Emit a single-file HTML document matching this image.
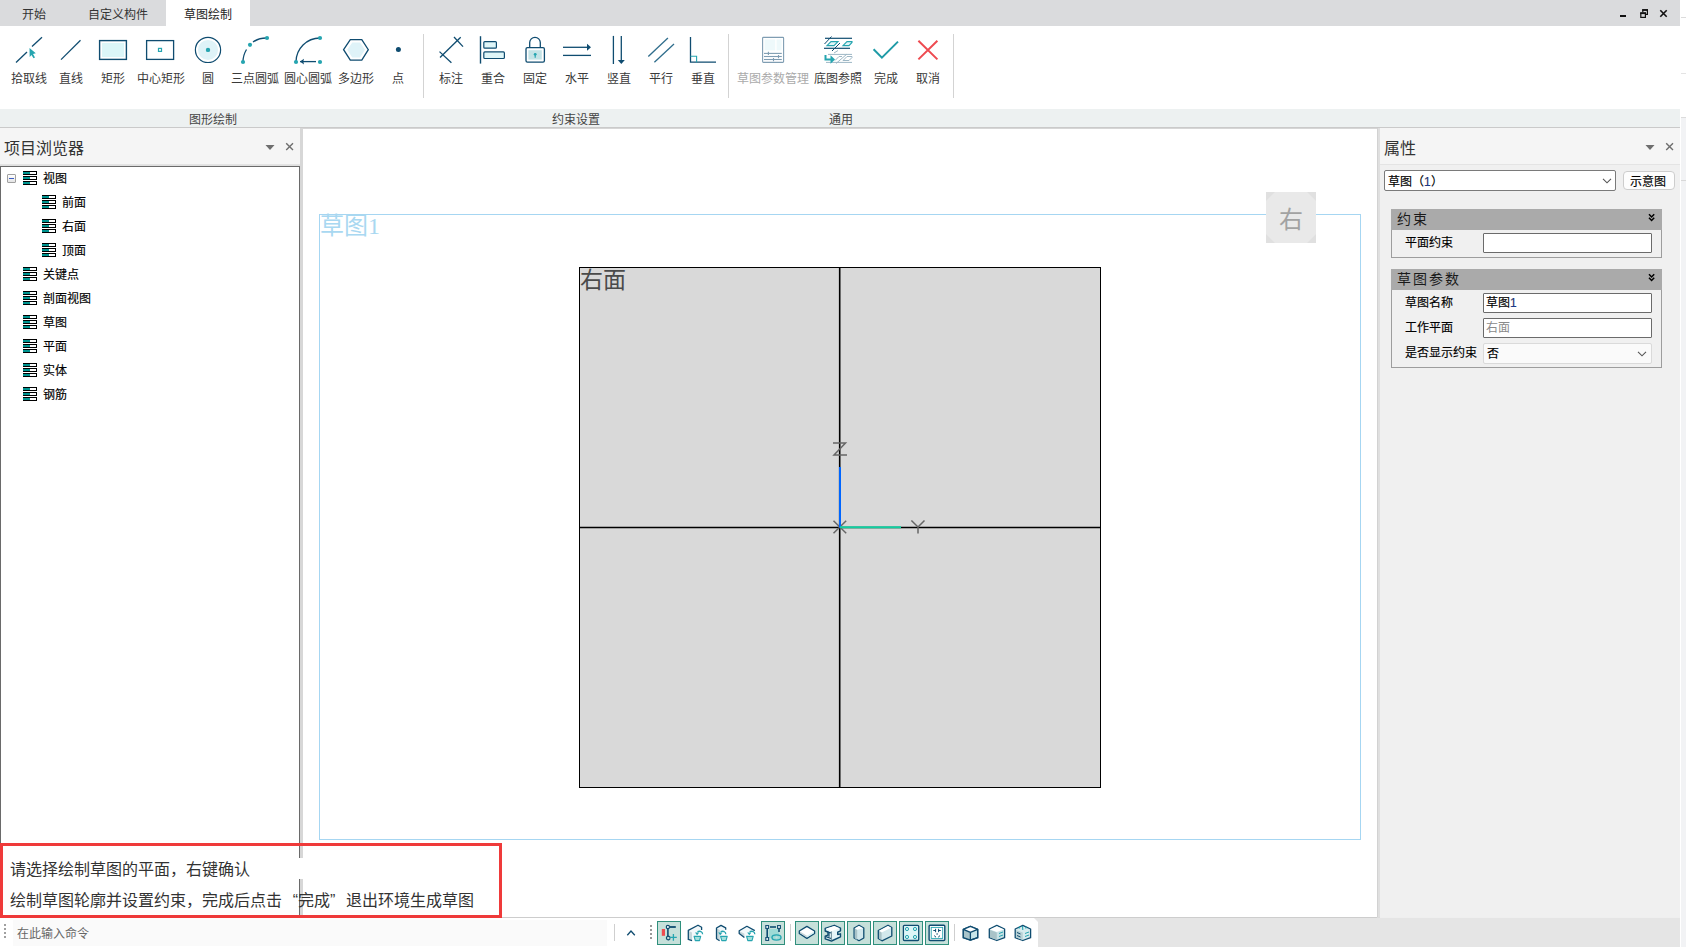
<!DOCTYPE html>
<html lang="zh-CN"><head><meta charset="utf-8">
<style>
*{box-sizing:border-box;margin:0;padding:0}
html,body{width:1686px;height:947px;overflow:hidden;background:#fff;font-family:"Liberation Sans",sans-serif;color:#333}
.a{position:absolute}
.t{position:absolute;white-space:nowrap;line-height:1}
#tabbar{left:0;top:0;width:1680px;height:26px;background:#dadbdd}
#ribbon{left:0;top:26px;width:1680px;height:83px;background:#fff}
#lblbar{left:0;top:109px;width:1680px;height:19px;background:#edf1f1;border-bottom:1px solid #cacaca}
.lbl{font-size:12px;color:#3a3a3a;top:72.5px}
.glbl{font-size:12px;color:#444;top:114px}
.sep{position:absolute;width:1px;background:#d3d3d3;top:34px;height:64px}
svg{position:absolute;overflow:visible}
</style></head><body>
<!-- tab bar -->
<div id="tabbar" class="a"></div>
<div class="a" style="left:166px;top:0;width:84px;height:26px;background:#fff"></div>
<div class="t" style="left:22px;top:9px;font-size:12px;color:#333">开始</div>
<div class="t" style="left:88px;top:9px;font-size:12px;color:#333">自定义构件</div>
<div class="t" style="left:184px;top:9px;font-size:12px;color:#222">草图绘制</div>
<!-- right strip -->
<div class="a" style="left:1680px;top:0;width:6px;height:947px;background:#fff"></div><div class="a" style="left:1681px;top:118px;width:5px;height:829px;background:#f2f3f5"></div><div class="a" style="left:1681px;top:17px;width:5px;height:1px;background:#dcdcdc"></div><div class="a" style="left:1681px;top:73px;width:5px;height:1px;background:#e4e4e4"></div><div class="a" style="left:1681px;top:117px;width:5px;height:1px;background:#dcdcdc"></div><div class="a" style="left:1681px;top:180px;width:5px;height:1px;background:#d8d8d8"></div>


<!-- main area backgrounds -->
<div class="a" style="left:0;top:128px;width:1680px;height:790px;background:#dfdfdf"></div>
<!-- left panel -->
<div class="a" style="left:0;top:128px;width:300px;height:37px;background:#f5f5f5;border-bottom:1px solid #e3e3e3"></div>
<div class="t" style="left:4px;top:141px;font-size:16px;color:#333">项目浏览器</div>
<svg width="10" height="8" style="left:265px;top:144px"><path d="M0.5,1 L9.5,1 L5,6 Z" fill="#6e6e6e"/></svg>
<svg width="10" height="10" style="left:285px;top:142px"><path d="M1.2,1.2 L8,8 M8,1.2 L1.2,8" stroke="#6e6e6e" stroke-width="1.4"/></svg>
<div class="a" style="left:0;top:166px;width:300px;height:752px;background:#fff;border:1px solid #6a6a6a;border-bottom:none"></div>
<div class="a" style="left:300px;top:128px;width:3px;height:790px;background:#d7d7d7"></div>
<!-- canvas -->
<div class="a" style="left:303px;top:128px;width:1074px;height:789px;background:#fff"></div>
<div class="a" style="left:1377px;top:128px;width:1px;height:790px;background:#d2d2d2"></div>
<div class="a" style="left:303px;top:128px;width:1074px;height:1px;background:#d6d6d6"></div>
<div class="a" style="left:303px;top:917px;width:1075px;height:1px;background:#d2d2d2"></div>
<!-- right panel -->
<div class="a" style="left:1380px;top:128px;width:300px;height:790px;background:#f0f0f0"></div>
<div class="a" style="left:1380px;top:128px;width:300px;height:37px;background:#f5f5f5;border-bottom:1px solid #e4e4e4"></div>
<div class="t" style="left:1384px;top:141px;font-size:16px;color:#333">属性</div>
<svg width="10" height="8" style="left:1645px;top:144px"><path d="M0.5,1 L9.5,1 L5,6 Z" fill="#6e6e6e"/></svg>
<svg width="10" height="10" style="left:1665px;top:142px"><path d="M1.2,1.2 L8,8 M8,1.2 L1.2,8" stroke="#6e6e6e" stroke-width="1.4"/></svg>
<!-- status bar -->
<div class="a" style="left:0;top:917px;width:1680px;height:30px;background:#e5e5e5;border-top:1px solid #cdcdcd"></div>
<!-- tree -->
<div class="a" style="left:7px;top:174px;width:9px;height:9px;border:1px solid #a0a0a0;border-radius:1px;background:linear-gradient(#fff,#e4e4e4)"></div>
<div class="a" style="left:9px;top:178px;width:5px;height:1px;background:#3d5ec4"></div>
<svg width="14" height="14" style="left:23px;top:171px" shape-rendering="crispEdges"><g><rect x="0" y="0" width="14" height="4" fill="#000"/><rect x="0" y="1" width="7" height="2" fill="#009490"/><rect x="7" y="1" width="6" height="2" fill="#fff"/><rect x="0" y="5" width="14" height="4" fill="#000"/><rect x="0" y="6" width="7" height="2" fill="#009490"/><rect x="7" y="6" width="6" height="2" fill="#fff"/><rect x="0" y="10" width="14" height="4" fill="#000"/><rect x="0" y="11" width="7" height="2" fill="#009490"/><rect x="7" y="11" width="6" height="2" fill="#fff"/></g></svg>
<div class="t" style="left:43px;top:173px;font-size:12px;color:#000;-webkit-text-stroke:0.15px #000">视图</div>
<svg width="14" height="14" style="left:42px;top:195px" shape-rendering="crispEdges"><g><rect x="0" y="0" width="14" height="4" fill="#000"/><rect x="0" y="1" width="7" height="2" fill="#009490"/><rect x="7" y="1" width="6" height="2" fill="#fff"/><rect x="0" y="5" width="14" height="4" fill="#000"/><rect x="0" y="6" width="7" height="2" fill="#009490"/><rect x="7" y="6" width="6" height="2" fill="#fff"/><rect x="0" y="10" width="14" height="4" fill="#000"/><rect x="0" y="11" width="7" height="2" fill="#009490"/><rect x="7" y="11" width="6" height="2" fill="#fff"/></g></svg>
<div class="t" style="left:62px;top:197px;font-size:12px;color:#000;-webkit-text-stroke:0.15px #000">前面</div>
<svg width="14" height="14" style="left:42px;top:219px" shape-rendering="crispEdges"><g><rect x="0" y="0" width="14" height="4" fill="#000"/><rect x="0" y="1" width="7" height="2" fill="#009490"/><rect x="7" y="1" width="6" height="2" fill="#fff"/><rect x="0" y="5" width="14" height="4" fill="#000"/><rect x="0" y="6" width="7" height="2" fill="#009490"/><rect x="7" y="6" width="6" height="2" fill="#fff"/><rect x="0" y="10" width="14" height="4" fill="#000"/><rect x="0" y="11" width="7" height="2" fill="#009490"/><rect x="7" y="11" width="6" height="2" fill="#fff"/></g></svg>
<div class="t" style="left:62px;top:221px;font-size:12px;color:#000;-webkit-text-stroke:0.15px #000">右面</div>
<svg width="14" height="14" style="left:42px;top:243px" shape-rendering="crispEdges"><g><rect x="0" y="0" width="14" height="4" fill="#000"/><rect x="0" y="1" width="7" height="2" fill="#009490"/><rect x="7" y="1" width="6" height="2" fill="#fff"/><rect x="0" y="5" width="14" height="4" fill="#000"/><rect x="0" y="6" width="7" height="2" fill="#009490"/><rect x="7" y="6" width="6" height="2" fill="#fff"/><rect x="0" y="10" width="14" height="4" fill="#000"/><rect x="0" y="11" width="7" height="2" fill="#009490"/><rect x="7" y="11" width="6" height="2" fill="#fff"/></g></svg>
<div class="t" style="left:62px;top:245px;font-size:12px;color:#000;-webkit-text-stroke:0.15px #000">顶面</div>
<svg width="14" height="14" style="left:23px;top:267px" shape-rendering="crispEdges"><g><rect x="0" y="0" width="14" height="4" fill="#000"/><rect x="0" y="1" width="7" height="2" fill="#009490"/><rect x="7" y="1" width="6" height="2" fill="#fff"/><rect x="0" y="5" width="14" height="4" fill="#000"/><rect x="0" y="6" width="7" height="2" fill="#009490"/><rect x="7" y="6" width="6" height="2" fill="#fff"/><rect x="0" y="10" width="14" height="4" fill="#000"/><rect x="0" y="11" width="7" height="2" fill="#009490"/><rect x="7" y="11" width="6" height="2" fill="#fff"/></g></svg>
<div class="t" style="left:43px;top:269px;font-size:12px;color:#000;-webkit-text-stroke:0.15px #000">关键点</div>
<svg width="14" height="14" style="left:23px;top:291px" shape-rendering="crispEdges"><g><rect x="0" y="0" width="14" height="4" fill="#000"/><rect x="0" y="1" width="7" height="2" fill="#009490"/><rect x="7" y="1" width="6" height="2" fill="#fff"/><rect x="0" y="5" width="14" height="4" fill="#000"/><rect x="0" y="6" width="7" height="2" fill="#009490"/><rect x="7" y="6" width="6" height="2" fill="#fff"/><rect x="0" y="10" width="14" height="4" fill="#000"/><rect x="0" y="11" width="7" height="2" fill="#009490"/><rect x="7" y="11" width="6" height="2" fill="#fff"/></g></svg>
<div class="t" style="left:43px;top:293px;font-size:12px;color:#000;-webkit-text-stroke:0.15px #000">剖面视图</div>
<svg width="14" height="14" style="left:23px;top:315px" shape-rendering="crispEdges"><g><rect x="0" y="0" width="14" height="4" fill="#000"/><rect x="0" y="1" width="7" height="2" fill="#009490"/><rect x="7" y="1" width="6" height="2" fill="#fff"/><rect x="0" y="5" width="14" height="4" fill="#000"/><rect x="0" y="6" width="7" height="2" fill="#009490"/><rect x="7" y="6" width="6" height="2" fill="#fff"/><rect x="0" y="10" width="14" height="4" fill="#000"/><rect x="0" y="11" width="7" height="2" fill="#009490"/><rect x="7" y="11" width="6" height="2" fill="#fff"/></g></svg>
<div class="t" style="left:43px;top:317px;font-size:12px;color:#000;-webkit-text-stroke:0.15px #000">草图</div>
<svg width="14" height="14" style="left:23px;top:339px" shape-rendering="crispEdges"><g><rect x="0" y="0" width="14" height="4" fill="#000"/><rect x="0" y="1" width="7" height="2" fill="#009490"/><rect x="7" y="1" width="6" height="2" fill="#fff"/><rect x="0" y="5" width="14" height="4" fill="#000"/><rect x="0" y="6" width="7" height="2" fill="#009490"/><rect x="7" y="6" width="6" height="2" fill="#fff"/><rect x="0" y="10" width="14" height="4" fill="#000"/><rect x="0" y="11" width="7" height="2" fill="#009490"/><rect x="7" y="11" width="6" height="2" fill="#fff"/></g></svg>
<div class="t" style="left:43px;top:341px;font-size:12px;color:#000;-webkit-text-stroke:0.15px #000">平面</div>
<svg width="14" height="14" style="left:23px;top:363px" shape-rendering="crispEdges"><g><rect x="0" y="0" width="14" height="4" fill="#000"/><rect x="0" y="1" width="7" height="2" fill="#009490"/><rect x="7" y="1" width="6" height="2" fill="#fff"/><rect x="0" y="5" width="14" height="4" fill="#000"/><rect x="0" y="6" width="7" height="2" fill="#009490"/><rect x="7" y="6" width="6" height="2" fill="#fff"/><rect x="0" y="10" width="14" height="4" fill="#000"/><rect x="0" y="11" width="7" height="2" fill="#009490"/><rect x="7" y="11" width="6" height="2" fill="#fff"/></g></svg>
<div class="t" style="left:43px;top:365px;font-size:12px;color:#000;-webkit-text-stroke:0.15px #000">实体</div>
<svg width="14" height="14" style="left:23px;top:387px" shape-rendering="crispEdges"><g><rect x="0" y="0" width="14" height="4" fill="#000"/><rect x="0" y="1" width="7" height="2" fill="#009490"/><rect x="7" y="1" width="6" height="2" fill="#fff"/><rect x="0" y="5" width="14" height="4" fill="#000"/><rect x="0" y="6" width="7" height="2" fill="#009490"/><rect x="7" y="6" width="6" height="2" fill="#fff"/><rect x="0" y="10" width="14" height="4" fill="#000"/><rect x="0" y="11" width="7" height="2" fill="#009490"/><rect x="7" y="11" width="6" height="2" fill="#fff"/></g></svg>
<div class="t" style="left:43px;top:389px;font-size:12px;color:#000;-webkit-text-stroke:0.15px #000">钢筋</div>

<!-- canvas content -->
<div class="a" style="left:319px;top:214px;width:1042px;height:626px;border:1px solid #a6d6f2"></div>
<div class="t" style="left:320px;top:214px;font-family:'Liberation Serif',serif;font-size:24px;color:#a9d8f1">草图1</div>
<svg width="50" height="51" style="left:1266px;top:192px"><path d="M0,0 H50 V51 H0 Z" fill="#e0e0e0"/><path d="M9,0 H41 L50,9 V42 L41,51 H9 L0,42 V9 Z" fill="#e9e9e9"/></svg>
<div class="t" style="left:1279px;top:208px;font-size:24px;color:#a2a2a2">右</div>
<div class="a" style="left:579px;top:267px;width:522px;height:521px;background:#d9d9d9;border:1.5px solid #000"></div>
<svg width="522" height="521" viewBox="579 267 522 521" style="left:579px;top:267px"><line x1="839.7" y1="267" x2="839.7" y2="788" stroke="#000" stroke-width="1.6"/><line x1="579" y1="527.5" x2="1101" y2="527.5" stroke="#000" stroke-width="1.6"/></svg>
<div class="t" style="left:580px;top:269px;font-family:'Liberation Serif',serif;font-size:23px;color:#4a4a4a">右面</div>
<svg width="120" height="100" style="left:800px;top:436px">
<g stroke="#666" stroke-width="1.5" fill="none">
<path d="M33,7 H45.5 L34,19 H47"/>
<path d="M33.5,84.8 L46.2,97.2 M46.2,84.8 L33.5,97.2"/>
<path d="M111.4,84.5 L118,91 L124.5,84.5 M118,91 V97.6"/>
</g>
<line x1="40" y1="31" x2="40" y2="91.5" stroke="#0066ff" stroke-width="2"/>
<line x1="40" y1="91.2" x2="101" y2="91.2" stroke="#10cfa0" stroke-width="2"/>
</svg>

<!-- properties -->
<div class="a" style="left:1384px;top:170px;width:232px;height:21px;background:#fff;border:1px solid #7a7a7a;border-radius:2px"></div>
<div class="t" style="left:1388px;top:176px;font-size:12px;color:#000;-webkit-text-stroke:0.15px #000">草图<span style="display:inline-block;width:12px;text-align:right">（</span><span style="color:#1a3a8a">1</span><span style="display:inline-block;width:12px;text-align:left">）</span></div>
<svg width="10" height="6" style="left:1602px;top:178px"><path d="M1,0.8 L5,4.8 L9,0.8" fill="none" stroke="#555" stroke-width="1.1"/></svg>
<div class="a" style="left:1623px;top:171px;width:52px;height:19px;background:#fdfdfd;border:1px solid #cdcdcd;border-radius:4px"></div>
<div class="t" style="left:1630px;top:176px;font-size:12px;color:#000;-webkit-text-stroke:0.15px #000">示意图</div>

<div class="a" style="left:1391px;top:209px;width:271px;height:49px;border:1px solid #9d9d9d;background:#f0f0f0"></div>
<div class="a" style="left:1391px;top:209px;width:271px;height:21px;background:#aaaaaa"></div>
<div class="t" style="left:1397px;top:212px;font-size:14px;color:#1a1a1a;letter-spacing:2px">约束</div>
<svg width="8" height="9" style="left:1648px;top:213px"><path d="M1,1.3 L3.6,4 L6.2,1.3 M1,4.8 L3.6,7.5 L6.2,4.8" fill="none" stroke="#000" stroke-width="1.5"/></svg>
<div class="t" style="left:1405px;top:237px;font-size:12px;color:#000;-webkit-text-stroke:0.15px #000">平面约束</div>
<div class="a" style="left:1483px;top:233px;width:169px;height:20px;background:#fff;border:1px solid #6b6b6b;border-radius:1px"></div>

<div class="a" style="left:1391px;top:269px;width:271px;height:99px;border:1px solid #9d9d9d;background:#f0f0f0"></div>
<div class="a" style="left:1391px;top:269px;width:271px;height:21px;background:#aaaaaa"></div>
<div class="t" style="left:1397px;top:272px;font-size:14px;color:#1a1a1a;letter-spacing:2px">草图参数</div>
<svg width="8" height="9" style="left:1648px;top:273px"><path d="M1,1.3 L3.6,4 L6.2,1.3 M1,4.8 L3.6,7.5 L6.2,4.8" fill="none" stroke="#000" stroke-width="1.5"/></svg>
<div class="t" style="left:1405px;top:297px;font-size:12px;color:#000;-webkit-text-stroke:0.15px #000">草图名称</div>
<div class="a" style="left:1483px;top:293px;width:169px;height:20px;background:#fff;border:1px solid #6b6b6b;border-radius:1px"></div>
<div class="t" style="left:1486px;top:297px;font-size:12px;color:#000;-webkit-text-stroke:0.15px #000">草图<span style="color:#1a3a8a">1</span></div>
<div class="t" style="left:1405px;top:322px;font-size:12px;color:#000;-webkit-text-stroke:0.15px #000">工作平面</div>
<div class="a" style="left:1483px;top:318px;width:169px;height:20px;background:#fff;border:1px solid #6b6b6b;border-radius:1px"></div>
<div class="t" style="left:1486px;top:322px;font-size:12px;color:#8a8a8a">右面</div>
<div class="t" style="left:1405px;top:347px;font-size:12px;color:#000;-webkit-text-stroke:0.15px #000">是否显示约束</div>
<div class="a" style="left:1483px;top:343px;width:169px;height:21px;background:#fafafa;border:1px solid #dadada;border-radius:2px"></div>
<div class="t" style="left:1487px;top:348px;font-size:12px;color:#000;-webkit-text-stroke:0.15px #000">否</div>
<svg width="10" height="6" style="left:1637px;top:351px"><path d="M1,0.8 L5,4.8 L9,0.8" fill="none" stroke="#555" stroke-width="1.1"/></svg>


<div class="a" style="left:1377px;top:917px;width:3px;height:1px;background:#dcdcdc"></div><div class="a" style="left:1380px;top:917px;width:300px;height:1px;background:#efefef"></div>
<!-- status bar content -->
<div class="a" style="left:0;top:918px;width:1038px;height:29px;background:#fff;clip-path:polygon(0 0,1034px 0,1038px 4px,1038px 100%,0 100%)"></div>
<div class="a" style="left:13px;top:920px;width:594px;height:26px;background:#fafafa"></div>
<div class="t" style="left:17px;top:928px;font-size:12px;color:#666">在此输入命令</div>
<svg width="1040" height="32" viewBox="0 915 1040 32" style="left:0;top:915px">
<g fill="#a0a0a0"><rect x="4" y="924" width="2" height="2"/><rect x="4" y="928" width="2" height="2"/><rect x="4" y="932" width="2" height="2"/><rect x="4" y="936" width="2" height="2"/></g>
<rect x="614" y="924" width="1" height="17" fill="#cfcfcf"/>
<path d="M627.3,935.2 L631,931 L634.8,935.2" fill="none" stroke="#0f4c70" stroke-width="1.3"/>
<g fill="#999"><rect x="650" y="925" width="2" height="2"/><rect x="650" y="929" width="2" height="2"/><rect x="650" y="933" width="2" height="2"/><rect x="650" y="937" width="2" height="2"/></g>
<g fill="#c6e0da" stroke="#2f8f7c" stroke-width="1">
<rect x="657.5" y="921.5" width="23" height="23"/>
<rect x="761.5" y="921.5" width="23" height="23"/>
<rect x="795.5" y="921.5" width="23" height="23"/>
<rect x="821.5" y="921.5" width="23" height="23"/>
<rect x="847.5" y="921.5" width="23" height="23"/>
<rect x="873.5" y="921.5" width="23" height="23"/>
<rect x="899.5" y="921.5" width="23" height="23"/>
<rect x="925.5" y="921.5" width="23" height="23"/>
</g>
<rect x="790" y="924" width="1" height="17" fill="#cfcfcf"/>
<rect x="954" y="924" width="1" height="17" fill="#cfcfcf"/>
<!-- btn1 -->
<rect x="661.8" y="929" width="3.2" height="6.8" fill="#ee4a50"/>
<line x1="667.9" y1="928.5" x2="667.9" y2="937" stroke="#0f4c70" stroke-width="1.6"/>
<line x1="669.5" y1="927" x2="675.8" y2="927" stroke="#0f4c70" stroke-width="1.8"/>
<circle cx="667.9" cy="927" r="1.6" fill="#fff" stroke="#0f4c70" stroke-width="1.2"/>
<path d="M670,938.2 A1.8,1.8 0 1 1 670,937.8" fill="none" stroke="#0f4c70" stroke-width="1.2"/>
<path d="M673.4,934 V940.8 M670,937.4 H676.8" stroke="#26a5b0" stroke-width="1.3"/>
<!-- icons 2-4 -->
<path d="M688.8,931 L698,926 L701,927.6 L701,933 L694,937 L692,940.5 L689,939 Z" fill="#f2f8fa"/><path d="M688.8,931 L692,932.5 L692,940.2 L688.8,939 Z" fill="#c5d6da"/>
<path d="M701.6,929.9 V927.2 L698,925.2 L688.3,930.4 V939.4 L692.1,940.7" fill="none" stroke="#0f4c70" stroke-width="1.3" stroke-linejoin="round"/>
<path d="M702.6,934.2 C702.6,932 700.6,930.6 697.4,931.6" fill="none" stroke="#26a5b0" stroke-width="1.3"/>
<path d="M695.0,932.6 L699.2,932.6 L697.1,935.2 Z" fill="#26a5b0"/>
<path d="M694.1,936.4 H700.7 L699.5,940.6 H695.3000000000001 Z" fill="#a3e0dc" stroke="#26a5b0" stroke-width="1.1" stroke-linejoin="round"/>
<path d="M717,928.3 L721,926 L725,928 L725,931 L721,936 L719.6,940 L717,938.5 Z" fill="#f2f8fa"/><path d="M717,928.5 L719.8,930 L719.8,940.2 L717,938.6 Z" fill="#c5d6da"/>
<path d="M725.7,929.7 V927.9 L721,925.4 L716.5,928 V938.8 L719.6,940.7" fill="none" stroke="#0f4c70" stroke-width="1.3" stroke-linejoin="round"/>
<path d="M725.8,934.2 C725.8,932 723.8,930.6 720.5999999999999,931.6" fill="none" stroke="#26a5b0" stroke-width="1.3"/>
<path d="M718.1999999999999,932.6 L722.4,932.6 L720.3,935.2 Z" fill="#26a5b0"/>
<path d="M720.6,936.4 H727.2 L726.0,940.6 H721.8000000000001 Z" fill="#a3e0dc" stroke="#26a5b0" stroke-width="1.1" stroke-linejoin="round"/>
<path d="M739.6,931 L746.9,926.8 L754.4,930.8 L749,934 L745,937 L739.6,933.3 Z" fill="#f2f8fa"/><path d="M739.6,931.2 L744.4,933.8 L744.4,937 L739.6,933.4 Z" fill="#c5d6da"/>
<path d="M754.8,930.6 L746.9,926.3 L739.2,930.8 V933.5 L744.4,937.4" fill="none" stroke="#0f4c70" stroke-width="1.3" stroke-linejoin="round"/>
<path d="M754.8,934.2 C754.8,932 752.8,930.6 749.5999999999999,931.6" fill="none" stroke="#26a5b0" stroke-width="1.3"/>
<path d="M747.1999999999999,932.6 L751.4,932.6 L749.3,935.2 Z" fill="#26a5b0"/>
<path d="M746.6,936.4 H753.2 L752.0,940.6 H747.8000000000001 Z" fill="#a3e0dc" stroke="#26a5b0" stroke-width="1.1" stroke-linejoin="round"/>
<!-- btn5 -->
<rect x="769" y="929" width="10" height="9" fill="#9edbd6"/>
<g stroke="#0f4c70" stroke-width="1.6"><line x1="767.2" y1="929" x2="767.2" y2="937"/><line x1="770" y1="927" x2="776" y2="927"/><line x1="779" y1="929" x2="779" y2="932"/></g>
<g fill="#fff" stroke="#0f4c70" stroke-width="1.1"><rect x="765.8" y="925.6" width="2.8" height="2.8"/><rect x="777.6" y="925.6" width="2.8" height="2.8"/><rect x="765.8" y="937.6" width="2.8" height="2.8"/></g>
<ellipse cx="776.5" cy="937.5" rx="4.5" ry="2.6" fill="#9edbd6" stroke="#26a5b0" stroke-width="1.4"/>
<circle cx="776.5" cy="937.5" r="1.1" fill="#c6e0da"/>
<!-- btn6 slab -->
<path d="M799.3,931 L806.9,926.4 L814.6,931 L814.6,933.4 L806.9,938.4 L799.3,933.4 Z" fill="#fff" stroke="#0f4c70" stroke-width="1.3" stroke-linejoin="round"/>
<path d="M800,931.6 L806.9,935.8 L806.9,937.6 L800,933.2 Z" fill="#c9d6d9"/>
<path d="M806.9,935.8 L814,931.6 L814,933.2 L806.9,937.6 Z" fill="#d8f1f4"/>
<!-- btn7 I-beam -->
<path d="M825.2,928.3 L834.3,925.3 L840.5,928.1 L840.5,930.8 L837.7,932.2 L837.7,934.6 L840.5,933.8 L840.5,936.8 L831.5,941 L825.2,938.8 L825.2,936.2 L828,935.2 L828,932 L825.2,931 Z" fill="#e6f5f7" stroke="#0f4c70" stroke-width="1.4" stroke-linejoin="round"/>
<path d="M826,928.6 L834.3,925.9 L839.8,928.2 L831.4,931.2 Z" fill="#fff"/>
<path d="M831.4,931.4 V940.5" stroke="#6f8f9a" stroke-width="1"/>
<path d="M826,931.2 L831,933 M826,936.6 L831,938.5 M829,932.6 V936.8" stroke="#0f4c70" stroke-width="1.2" fill="none"/>
<!-- btn8 prism -->
<path d="M859,925.2 L863.8,928 L863.8,938 L859,940.7 L854.1,938 L854.1,928 Z" fill="#d2e8ec" stroke="#0f4c70" stroke-width="1.3" stroke-linejoin="round"/>
<path d="M854.8,928.3 L859,925.9 L863.2,928.3 L857.2,929.8 Z" fill="#fff"/>
<path d="M854.8,928.6 L857.2,930 L857.2,940 L854.8,938.2 Z" fill="#aac3c8"/>
<!-- btn9 box -->
<path d="M878.3,930.5 L888,925.2 L891.8,927.5 L891.8,936 L882,940.8 L878.3,938.5 Z" fill="#d2e8ec" stroke="#0f4c70" stroke-width="1.3" stroke-linejoin="round"/>
<path d="M879,930.8 L888,925.9 L891.2,927.7 L881.6,932.4 Z" fill="#fff"/>
<path d="M879,931 L881.6,932.5 L881.6,940.2 L879,938.4 Z" fill="#aac3c8"/>
<!-- btn10 -->
<rect x="903.4" y="925.3" width="15.3" height="15.2" rx="1" fill="#ddf5f7" stroke="#0f4c70" stroke-width="1.3"/>
<g fill="none" stroke="#26a5b0" stroke-width="1"><circle cx="907" cy="929" r="1.6"/><circle cx="915" cy="929" r="1.6"/><circle cx="907" cy="937" r="1.6"/><circle cx="915" cy="937" r="1.6"/></g>
<!-- btn11 -->
<rect x="929.1" y="925.3" width="15.7" height="15.2" rx="1" fill="#fff" stroke="#0f4c70" stroke-width="1.4"/>
<rect x="931.2" y="927.4" width="11.5" height="11" fill="none" stroke="#26a5b0" stroke-width="0.9"/>
<g stroke="#0f4c70" stroke-width="1" fill="none">
<path d="M933.3,930.5 H935.6 M935.6,928.8 V932.2 M938.6,928.8 V932.2 M938.6,930.5 H940.8"/>
<path d="M937.1,933.2 V934.8"/>
<path d="M934.2,935.6 L936,937.2 M940,935.6 L938.2,937.2"/>
</g>
<!-- cubes -->
<path d="M970.4,926.3 L977.7,929.3 L977.7,937.7 L970.4,940.2 L963.3,937.7 L963.3,929.3 Z" fill="#c8e6ea" stroke="#0f4c70" stroke-width="1.3" stroke-linejoin="round"/>
<path d="M963.3,929.3 L970.4,932.4 L970.4,940.2 L963.3,937.7 Z" fill="#a8c4ca"/>
<path d="M963.3,929.3 L970.4,926.3 L977.7,929.3 L970.4,932.4 Z" fill="#fff"/>
<path d="M970.4,926.3 L977.7,929.3 L977.7,937.7 L970.4,940.2 L963.3,937.7 L963.3,929.3 Z M963.3,929.3 L970.4,932.4 L977.7,929.3 M970.4,932.4 V940.2" fill="none" stroke="#0f4c70" stroke-width="1.3" stroke-linejoin="round"/>
<path d="M996.8,925.3 L1004.6,929 L1004.6,937.7 L996.8,940.5 L989.3,937.7 L989.3,929 Z" fill="#c8e2e6" stroke="#0f4c70" stroke-width="1.3" stroke-linejoin="round"/>
<path d="M990,929.5 L996.8,926.2 L1004,929.5 L996.8,932 Z" fill="#fff"/>
<path d="M990,930 L996.8,932.5 L996.8,940 L990,937.5 Z" fill="#a9c3c8"/>
<path d="M999,933.5 L1003,932 M999,936.5 L1003,935" stroke="#26a5b0" stroke-width="1"/>
<path d="M1022.8,925.3 L1030.6,929 L1030.6,937.7 L1022.8,940.5 L1015.2,937.7 L1015.2,929 Z" fill="#d7ecef" stroke="#0f4c70" stroke-width="1.3" stroke-linejoin="round"/>
<path d="M1016,930 L1022.8,932.5 L1022.8,940 L1016,937.5 Z" fill="#b9d2d6"/>
<path d="M1017,932.5 L1020.5,934 M1017,935.5 L1020.5,937" stroke="#0f4c70" stroke-width="1"/>
<path d="M1025,933.5 L1029,932 M1025,936.5 L1029,935" stroke="#26a5b0" stroke-width="1"/>
<path d="M1019,928.5 L1019.8,926.5 M1022.5,926 L1022.8,930 M1026,926.5 L1025.8,928.5" stroke="#26a5b0" stroke-width="1.1"/>
</svg>
<!-- red note box -->
<div class="a" style="left:0;top:843px;width:502px;height:75px;border:3px solid #ef3a3a;background:#fff"></div>
<div class="a" style="left:299px;top:846px;width:1px;height:12px;background:#6a6a6a"></div>
<div class="a" style="left:300px;top:846px;width:3px;height:12px;background:#d7d7d7"></div>
<div class="a" style="left:299px;top:879px;width:1px;height:36px;background:#6a6a6a"></div>
<div class="a" style="left:300px;top:879px;width:3px;height:36px;background:#d7d7d7"></div>
<div class="t" style="left:10px;top:862px;font-size:16px;color:#333">请选择绘制草图的平面<span style="display:inline-block;width:16px;text-align:left">，</span>右键确认</div>
<div class="t" style="left:10px;top:893px;font-size:16px;color:#333">绘制草图轮廓并设置约束<span style="display:inline-block;width:16px;text-align:left">，</span>完成后点击<span style="display:inline-block;width:16px;text-align:right">“</span>完成<span style="display:inline-block;width:16px;text-align:left">”</span>退出环境生成草图</div>

<!-- window controls -->
<svg width="1686" height="30" viewBox="0 0 1686 30" style="left:0;top:0">
<rect x="1620" y="15" width="6" height="2" fill="#111"/>
<path d="M1642.8,12.2 V9.8 H1647.4 V14.4 H1645.8" fill="none" stroke="#111" stroke-width="1.2"/>
<rect x="1642.2" y="9.2" width="5.8" height="1.6" fill="#111"/>
<rect x="1640.8" y="13" width="4.6" height="4.4" fill="none" stroke="#111" stroke-width="1.2"/>
<rect x="1640.2" y="12.4" width="5.8" height="1.7" fill="#111"/>
<path d="M1660.3,10.3 L1666.7,16.7 M1666.7,10.3 L1660.3,16.7" stroke="#111" stroke-width="1.6"/>
</svg>
<div id="ribbon" class="a"></div>
<div id="lblbar" class="a"></div>
<div class="t glbl" style="left:189px">图形绘制</div>
<div class="t glbl" style="left:552px">约束设置</div>
<div class="t glbl" style="left:829px">通用</div>
<div class="sep" style="left:423px"></div>
<div class="sep" style="left:728px"></div>
<div class="sep" style="left:953px"></div>


<svg width="960" height="110" style="left:0;top:0" viewBox="0 0 960 110">
<g fill="none" stroke="#0f4c70" stroke-width="1.3" stroke-linecap="butt">
<!-- 拾取线 -->
<line x1="16" y1="62.5" x2="27" y2="52"/>
<line x1="32" y1="46.5" x2="42" y2="37.2"/>
<path d="M29.5,48 L35.8,53.2 L33,54 L35,57.5 L33.5,58.3 L31.5,55 L29.7,57 Z" fill="#26a5b0" stroke="none"/>
<!-- 直线 -->
<line x1="61" y1="59.6" x2="80.5" y2="40.3"/>
<!-- 矩形 -->
<rect x="102" y="43" width="22" height="14" fill="#dcf6f8" stroke="none"/>
<rect x="99.6" y="40.6" width="26.8" height="18.8" stroke-width="1.4"/>
<!-- 中心矩形 -->
<rect x="146.6" y="40.6" width="27" height="18.8" stroke-width="1.3"/>
<rect x="158.5" y="48.4" width="3" height="3" stroke="#26a5b0" stroke-width="1.2"/>
<!-- 圆 -->
<circle cx="208" cy="49.9" r="10" fill="#dff3f8" stroke="none"/>
<circle cx="208" cy="49.9" r="12.6" stroke-width="1.2"/>
<circle cx="208" cy="49.9" r="2.2" fill="#26a5b0" stroke="none"/>
<!-- 三点圆弧 -->
<path d="M243,62 A24,24 0 0 1 246.5,49.5"/>
<path d="M253,42 A24,24 0 0 1 267,38"/>
<circle cx="243" cy="62" r="2.1" fill="#26a5b0" stroke="none"/>
<circle cx="250" cy="44.8" r="2.1" fill="#26a5b0" stroke="none"/>
<circle cx="267" cy="38" r="2.1" fill="#26a5b0" stroke="none"/>
<!-- 圆心圆弧 -->
<path d="M296,62 A24,24 0 0 1 320,38"/>
<line x1="300" y1="61.6" x2="316" y2="61.6"/>
<path d="M300,61.6 L304,58.8 L303.3,61.6 L304,64.4 Z" fill="#0f4c70" stroke="none"/>
<circle cx="296" cy="62" r="2.1" fill="#26a5b0" stroke="none"/>
<circle cx="320" cy="38" r="2.1" fill="#26a5b0" stroke="none"/>
<circle cx="320" cy="62" r="2.1" fill="#26a5b0" stroke="none"/>
<!-- 多边形 -->
<path d="M347.2,49.7 L352.3,42.4 L360,42.4 L365,49.7 L360,57.4 L352.3,57.4 Z" fill="#dff3f8" stroke="none"/>
<path d="M343.6,49.7 L350.3,39.7 L361.8,39.7 L368.3,49.7 L361.8,60.2 L350.3,60.2 Z" stroke-width="1.3"/>
<!-- 点 -->
<circle cx="398.4" cy="49.5" r="2.5" fill="#0f4c70" stroke="none"/>
<!-- 标注 -->
<line x1="440" y1="57.5" x2="460.7" y2="37.3"/>
<line x1="454" y1="37" x2="463" y2="46.6"/>
<line x1="439.5" y1="51.6" x2="451.4" y2="62.8"/>
<!-- 重合 -->
<line x1="480.5" y1="36.2" x2="480.5" y2="63.6" stroke-width="1.4"/>
<rect x="483.8" y="41.6" width="12.6" height="6.6" rx="1" fill="#dff6f8" stroke-width="1.2"/>
<rect x="483.8" y="51.9" width="20.6" height="6.6" rx="1" fill="#dff6f8" stroke-width="1.2"/>
<!-- 固定 -->
<path d="M529.7,47.2 L529.7,42.6 A5.3,5.3 0 0 1 540.3,42.6 L540.3,47.2" stroke-width="1.3"/>
<rect x="526" y="47.6" width="18.4" height="14.6" rx="1.4" fill="#fff" stroke-width="1.3"/>
<rect x="528.4" y="50.2" width="13.4" height="9.4" fill="#c4e3e6" stroke="none"/>
<circle cx="535.2" cy="54.3" r="1.4" fill="#26a5b0" stroke="none"/>
<line x1="535.2" y1="54.3" x2="535.2" y2="57.8" stroke="#26a5b0" stroke-width="1.2"/>
<!-- 水平 -->
<line x1="563" y1="47.3" x2="588" y2="47.3"/>
<path d="M591,47.3 L587,43.8 L587,50.8 Z" fill="#0f4c70" stroke="none"/>
<line x1="563" y1="55.4" x2="591" y2="55.4"/>
<!-- 竖直 -->
<line x1="613.4" y1="35.9" x2="613.4" y2="64"/>
<line x1="621.3" y1="35.9" x2="621.3" y2="61"/>
<path d="M621.3,64 L617.8,60 L624.8,60 Z" fill="#0f4c70" stroke="none"/>
<!-- 平行 -->
<line x1="648.3" y1="56.5" x2="667.9" y2="38" stroke="#2f6d8c"/>
<line x1="654.4" y1="62.2" x2="674" y2="43.9" stroke="#2f6d8c"/>
<!-- 垂直 -->
<path d="M690.5,37 L690.5,62.2 L716,62.2"/>
<path d="M690.5,56.2 L696.6,56.2 L696.6,62.2" stroke="#26a5b0" stroke-width="1.1"/>
<!-- 草图参数管理 (disabled) -->
<rect x="762.6" y="37.4" width="21" height="25" rx="0.8" stroke="#7f9db2" stroke-width="1.1"/>
<rect x="764.6" y="39.4" width="10.6" height="11" fill="#eef9fb" stroke="none"/>
<rect x="776.6" y="39.4" width="5" height="11" fill="#eef9fb" stroke="none"/>
<g stroke="#7f9db2" stroke-width="1.1">
<line x1="764" y1="53.4" x2="781.8" y2="53.4"/>
<line x1="764" y1="56.5" x2="781.8" y2="56.5"/>
<line x1="764" y1="59.5" x2="781.8" y2="59.5"/>
<line x1="768.4" y1="51.8" x2="768.4" y2="55"/>
<line x1="778.5" y1="55" x2="778.5" y2="58.2"/>
<line x1="773.5" y1="58" x2="773.5" y2="61.2"/>
</g>
<!-- 底图参照 -->
<line x1="825" y1="38.3" x2="852" y2="38.3" stroke-width="1.2"/>
<line x1="824" y1="48.3" x2="850" y2="48.3" stroke-width="1.2"/>
<line x1="824.5" y1="44" x2="831.5" y2="36.5" stroke-width="1"/>
<line x1="832" y1="51" x2="840" y2="43" stroke-width="1"/>
<path d="M827,45.6 L831,41.6 L838,41.6 L834,45.6 Z" stroke="#26a5b0" fill="#e2f6f8" stroke-width="1.1"/>
<path d="M843,45.6 L847,41.6 L852,41.6 L852,42.5 L849,45.6 Z" stroke="#26a5b0" fill="#e2f6f8" stroke-width="1.1"/>
<g stroke="#9db7c5" stroke-width="1">
<line x1="828" y1="54.4" x2="852" y2="54.4"/>
<line x1="826" y1="62.4" x2="852" y2="62.4"/>
<line x1="834" y1="53" x2="838" y2="50.5"/>
<line x1="836" y1="63.5" x2="847" y2="54"/>
<path d="M843,60.5 L847,56.5 L852,56.5 L852,57.5 L849,60.5 Z"/>
<path d="M835,60.5 L839,56.5 L842,56.5"/>
</g>
<path d="M825.5,55 L825.5,59.5 L831,59.5" stroke="#26a5b0" stroke-width="2"/>
<path d="M835,59.5 L830.5,55.3 L830.5,63.7 Z" fill="#26a5b0" stroke="none"/>
<!-- 完成 -->
<path d="M873.6,49.3 L881.9,57.6 L898,41.6" stroke="#1f9ba7" stroke-width="2"/>
<!-- 取消 -->
<path d="M918.4,40.7 L937.4,59.4 M937.4,40.7 L918.4,59.4" stroke="#ee4a50" stroke-width="2"/>
</g>
</svg>
<div class="t lbl" style="left:11px">拾取线</div>
<div class="t lbl" style="left:59px">直线</div>
<div class="t lbl" style="left:101px">矩形</div>
<div class="t lbl" style="left:136.5px">中心矩形</div>
<div class="t lbl" style="left:202px">圆</div>
<div class="t lbl" style="left:231px">三点圆弧</div>
<div class="t lbl" style="left:284px">圆心圆弧</div>
<div class="t lbl" style="left:338px">多边形</div>
<div class="t lbl" style="left:392px">点</div>
<div class="t lbl" style="left:439px">标注</div>
<div class="t lbl" style="left:481px">重合</div>
<div class="t lbl" style="left:523px">固定</div>
<div class="t lbl" style="left:565px">水平</div>
<div class="t lbl" style="left:607px">竖直</div>
<div class="t lbl" style="left:649px">平行</div>
<div class="t lbl" style="left:691px">垂直</div>
<div class="t lbl" style="left:737px;color:#aaa">草图参数管理</div>
<div class="t lbl" style="left:814px">底图参照</div>
<div class="t lbl" style="left:874px">完成</div>
<div class="t lbl" style="left:916px">取消</div>
</body></html>
